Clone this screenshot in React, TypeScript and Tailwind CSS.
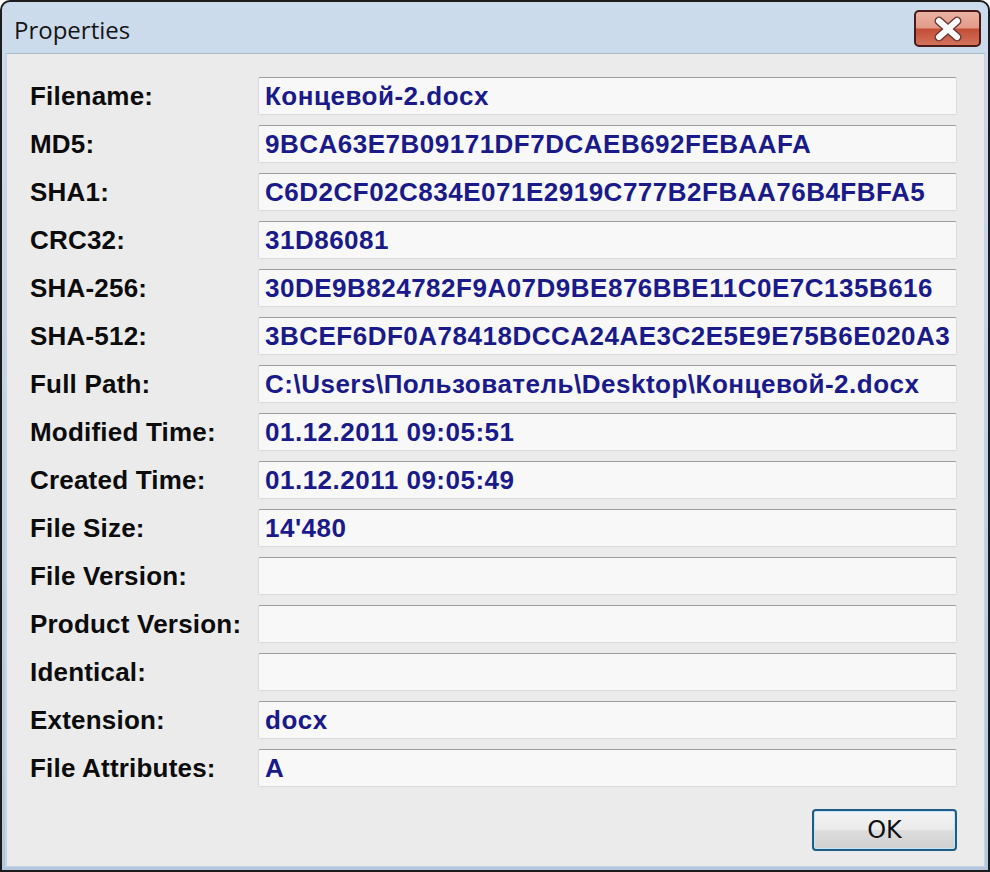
import React from "react";

const rows: [string, string][] = [
  ["Filename:", "Концевой-2.docx"],
  ["MD5:", "9BCA63E7B09171DF7DCAEB692FEBAAFA"],
  ["SHA1:", "C6D2CF02C834E071E2919C777B2FBAA76B4FBFA5"],
  ["CRC32:", "31D86081"],
  ["SHA-256:", "30DE9B824782F9A07D9BE876BBE11C0E7C135B616"],
  ["SHA-512:", "3BCEF6DF0A78418DCCA24AE3C2E5E9E75B6E020A3"],
  ["Full Path:", "C:\\Users\\Пользователь\\Desktop\\Концевой-2.docx"],
  ["Modified Time:", "01.12.2011 09:05:51"],
  ["Created Time:", "01.12.2011 09:05:49"],
  ["File Size:", "14'480"],
  ["File Version:", ""],
  ["Product Version:", ""],
  ["Identical:", ""],
  ["Extension:", "docx"],
  ["File Attributes:", "A"],
];

export default function App() {
  return (
    <div className="w-[990px] h-[872px] bg-white overflow-hidden">
      <div className="w-full h-full rounded-t-[10px] border-2 border-[#1c1c1c] bg-[linear-gradient(to_bottom,#cddcec,#b3c8df)] flex flex-col">
        {/* Title bar */}
        <div className="h-[51px] flex items-start justify-between pl-[12px] pr-[7px] shrink-0">
          <span
            className="text-[24px] text-[#151515] mt-[16px] leading-none"
            style={{ fontFamily: '"Open Sans", "Liberation Sans", sans-serif' }}
          >
            Properties
          </span>
          <div className="w-[67px] h-[37px] mt-[8px] rounded-[5px] border-2 border-[#4a1a16] overflow-hidden bg-[linear-gradient(to_bottom,#eab3a3_0%,#e39a88_48%,#c44d36_52%,#d3725c_100%)] flex items-center justify-center">
            <svg width="34" height="26" viewBox="0 0 34 26">
              <path
                d="M8 5 L26 21 M26 5 L8 21"
                stroke="#6b3a36"
                strokeWidth="9"
                strokeLinecap="round"
                fill="none"
              />
              <path
                d="M8 5 L26 21 M26 5 L8 21"
                stroke="#fbfbfb"
                strokeWidth="6"
                strokeLinecap="round"
                fill="none"
              />
            </svg>
          </div>
        </div>
        {/* Body */}
        <div className="flex-1 mx-[3px] mb-[3px] border-t border-[#a9b9c9] border-l-2 border-r border-b border-l-[#c8d4e0] border-r-[#c8d4e0] border-b-[#c8d4e0] bg-[#ebebeb] flex flex-col pt-[23px] pl-[23px] pr-[27px]">
          <div className="flex flex-col gap-[10px]">
            {rows.map(([label, value]) => (
              <div key={label} className="flex items-center h-[38px]">
                <div
                  className="w-[228px] shrink-0 text-[26px] font-bold text-[#0c0c0c] leading-none tracking-[0.2px]"
                  style={{ fontFamily: '"Liberation Sans", Arial, sans-serif' }}
                >
                  {label}
                </div>
                <div className="flex-1 min-w-0 h-[38px] rounded-[2px] border border-[#dadada] border-t-[#9c9c9c] bg-[#f8f8f8] overflow-hidden whitespace-nowrap flex items-center pl-[6px]">
                  <span
                    className="text-[26px] font-bold text-[#1a1a8a] leading-none tracking-[0.5px]"
                    style={{ fontFamily: '"Liberation Sans", Arial, sans-serif' }}
                  >
                    {value}
                  </span>
                </div>
              </div>
            ))}
          </div>
          <div className="flex justify-end mt-[22px]">
            <div className="w-[145px] h-[42px] rounded-[4px] border-2 border-[#1f5c84] bg-[linear-gradient(to_bottom,#f3f3f3_0%,#ebebeb_48%,#dddddd_52%,#cfcfcf_100%)] shadow-[inset_0_0_0_1px_#bfe6f8] flex items-center justify-center">
              <span
                className="text-[24px] text-[#111]"
                style={{ fontFamily: '"DejaVu Sans", sans-serif' }}
              >
                OK
              </span>
            </div>
          </div>
        </div>
      </div>
    </div>
  );
}
